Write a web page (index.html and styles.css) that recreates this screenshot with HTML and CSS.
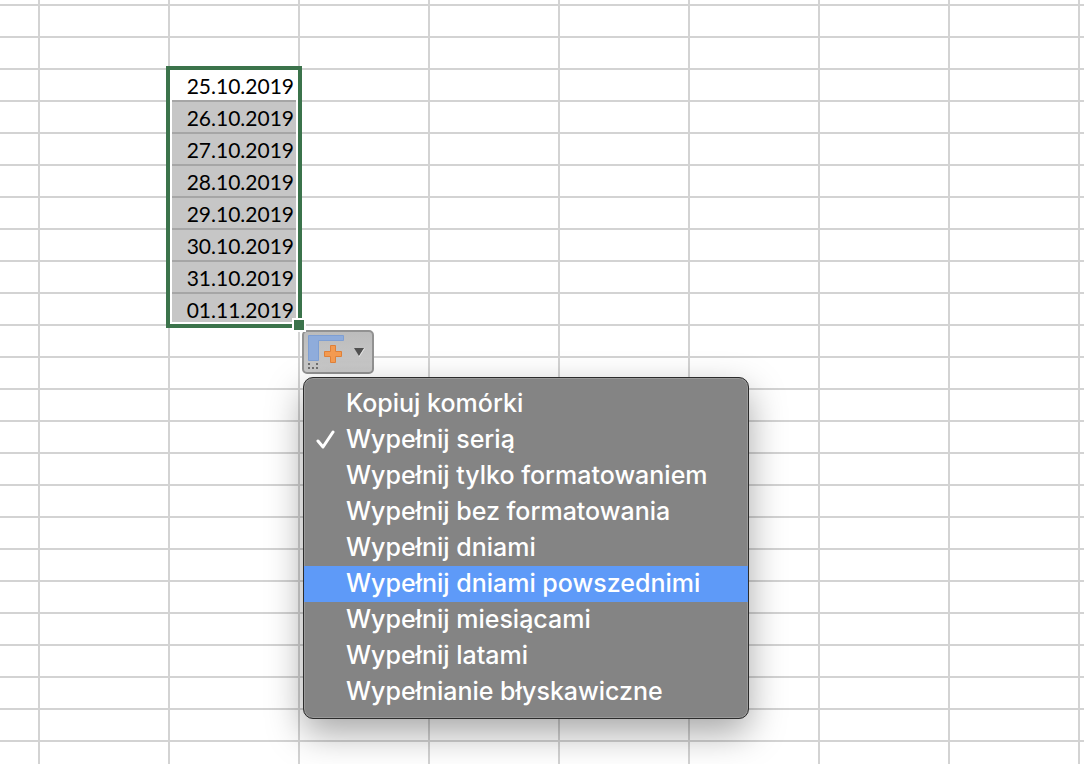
FILE: index.html
```
<!DOCTYPE html>
<html lang="pl">
<head>
  <meta charset="UTF-8">
  <meta name="viewport" content="width=device-width, initial-scale=1.0">
  <title>Arkusz</title>
  <link rel="stylesheet" href="styles.css">
</head>
<body>
  <main class="sheet">
    <!-- Selected range -->
    <div class="selection">
      <table class="cells">
        <tbody>
          <tr><td class="active">25.10.2019</td></tr>
          <tr><td>26.10.2019</td></tr>
          <tr><td>27.10.2019</td></tr>
          <tr><td>28.10.2019</td></tr>
          <tr><td>29.10.2019</td></tr>
          <tr><td>30.10.2019</td></tr>
          <tr><td>31.10.2019</td></tr>
          <tr><td class="last">01.11.2019</td></tr>
        </tbody>
      </table>
      <span class="fill-handle"></span>
    </div>

    <!-- Autofill options -->
    <div class="autofill">
      <button class="autofill-button" type="button" aria-haspopup="menu" aria-expanded="true" aria-label="Opcje autowypełniania">
        <svg width="68" height="40" viewBox="0 0 68 40" aria-hidden="true">
          <path d="M4.500 3.500h35v5h-25v20h-10z" fill="#8facdb" stroke="#7e9fd3"/>
          <path d="M4 31h2v2H4zM12 31h2v2h-2zM4 35h2v2H4zM8 35h2v2H8zM12 35h2v2h-2z" fill="#6e6e6e"/>
          <path d="M26.500 13.500h5v6h6v5h-6v6h-5v-6h-6v-5h6z" fill="#f39a50" stroke="#df8038"/>
          <path d="M50 16h10l-5 8z" fill="#505050"/>
          <path d="M60.500 16.500L55 25" fill="none" stroke="#e2e2e2"/>
        </svg>
      </button>

      <div class="menu" role="menu">
        <button class="menu-item" type="button" role="menuitem">Kopiuj komórki</button>
        <button class="menu-item" type="button" role="menuitemradio" aria-checked="true">
          <svg class="check" width="20" height="20" viewBox="0 0 20 20" aria-hidden="true">
            <path d="M2 11l5 6L17 2" fill="none" stroke="#fff" stroke-width="3" stroke-linecap="round" stroke-linejoin="round"/>
          </svg>
          Wypełnij serią
        </button>
        <button class="menu-item" type="button" role="menuitem">Wypełnij tylko formatowaniem</button>
        <button class="menu-item" type="button" role="menuitem">Wypełnij bez formatowania</button>
        <button class="menu-item" type="button" role="menuitem">Wypełnij dniami</button>
        <button class="menu-item highlighted" type="button" role="menuitem">Wypełnij dniami powszednimi</button>
        <button class="menu-item" type="button" role="menuitem">Wypełnij miesiącami</button>
        <button class="menu-item" type="button" role="menuitem">Wypełnij latami</button>
        <button class="menu-item" type="button" role="menuitem">Wypełnianie błyskawiczne</button>
      </div>
    </div>
  </main>
</body>
</html>
```
FILE: styles.css
```
* {
  box-sizing: border-box;
}

body {
  margin: 0;
  background-color: #fff;
}

/* Empty cells are 130 x 32, drawn as repeating lines */
.sheet {
  min-height: 100vh;
  padding: 66px 0 0 166px;
  background-image:
    linear-gradient(to right, #d3d3d3 2px, transparent 2px),
    linear-gradient(to bottom, #d3d3d3 2px, transparent 2px);
  background-size: 130px 100%, 100% 32px;
  background-position: 38px 0, 0 4px;
}

.selection {
  position: relative;
  width: 136px;
  border: 4px solid #3b734b;
  padding: 0 2px;
  background-color: #fff;
}

.cells {
  width: 100%;
  border-spacing: 0;
  font-family: Lato, sans-serif;
  font-size: 21px;
  line-height: 28px;
  color: #000;
}

.cells td {
  padding: 2px 2px 0 0;
  border-top: 2px solid #a6a6a6;
  background-color: #c6c6c6;
  text-align: right;
}

.cells .active {
  border-top: none;
  background-color: #fff;
}

.cells .last {
  box-shadow: inset 0 -2px #fff;
}

.fill-handle {
  position: absolute;
  right: -8px;
  bottom: -8px;
  width: 14px;
  height: 14px;
  border: 2px solid #fff;
  background-color: #3b734b;
}

.autofill {
  width: max-content;
  margin: 2px 0 0 136px;
}

.autofill-button {
  display: block;
  width: 72px;
  height: 44px;
  padding: 0;
  border: 2px solid #929292;
  border-radius: 5px;
  background: linear-gradient(#bcbcbc, #cacaca);
}

.autofill-button svg {
  display: block;
}

.menu {
  width: 446px;
  margin: 3px 0 0 1px;
  padding: 8px 0;
  border: 1px solid #2c2c2c;
  border-radius: 10px;
  background-color: #848484;
  box-shadow: inset 0 0 0 1px #999, 0 14px 36px rgba(0, 0, 0, 0.35);
}

.menu-item {
  position: relative;
  display: block;
  width: 100%;
  height: 36px;
  padding: 0 0 2px 42px;
  border: none;
  background: none;
  font-family: Inter, sans-serif;
  font-size: 25px;
  font-weight: 500;
  line-height: 34px;
  text-align: left;
  color: #fff;
}

.menu-item.highlighted,
.menu-item:hover {
  background-color: #5e9af8;
}

.check {
  position: absolute;
  left: 12px;
  top: 8px;
}
```
